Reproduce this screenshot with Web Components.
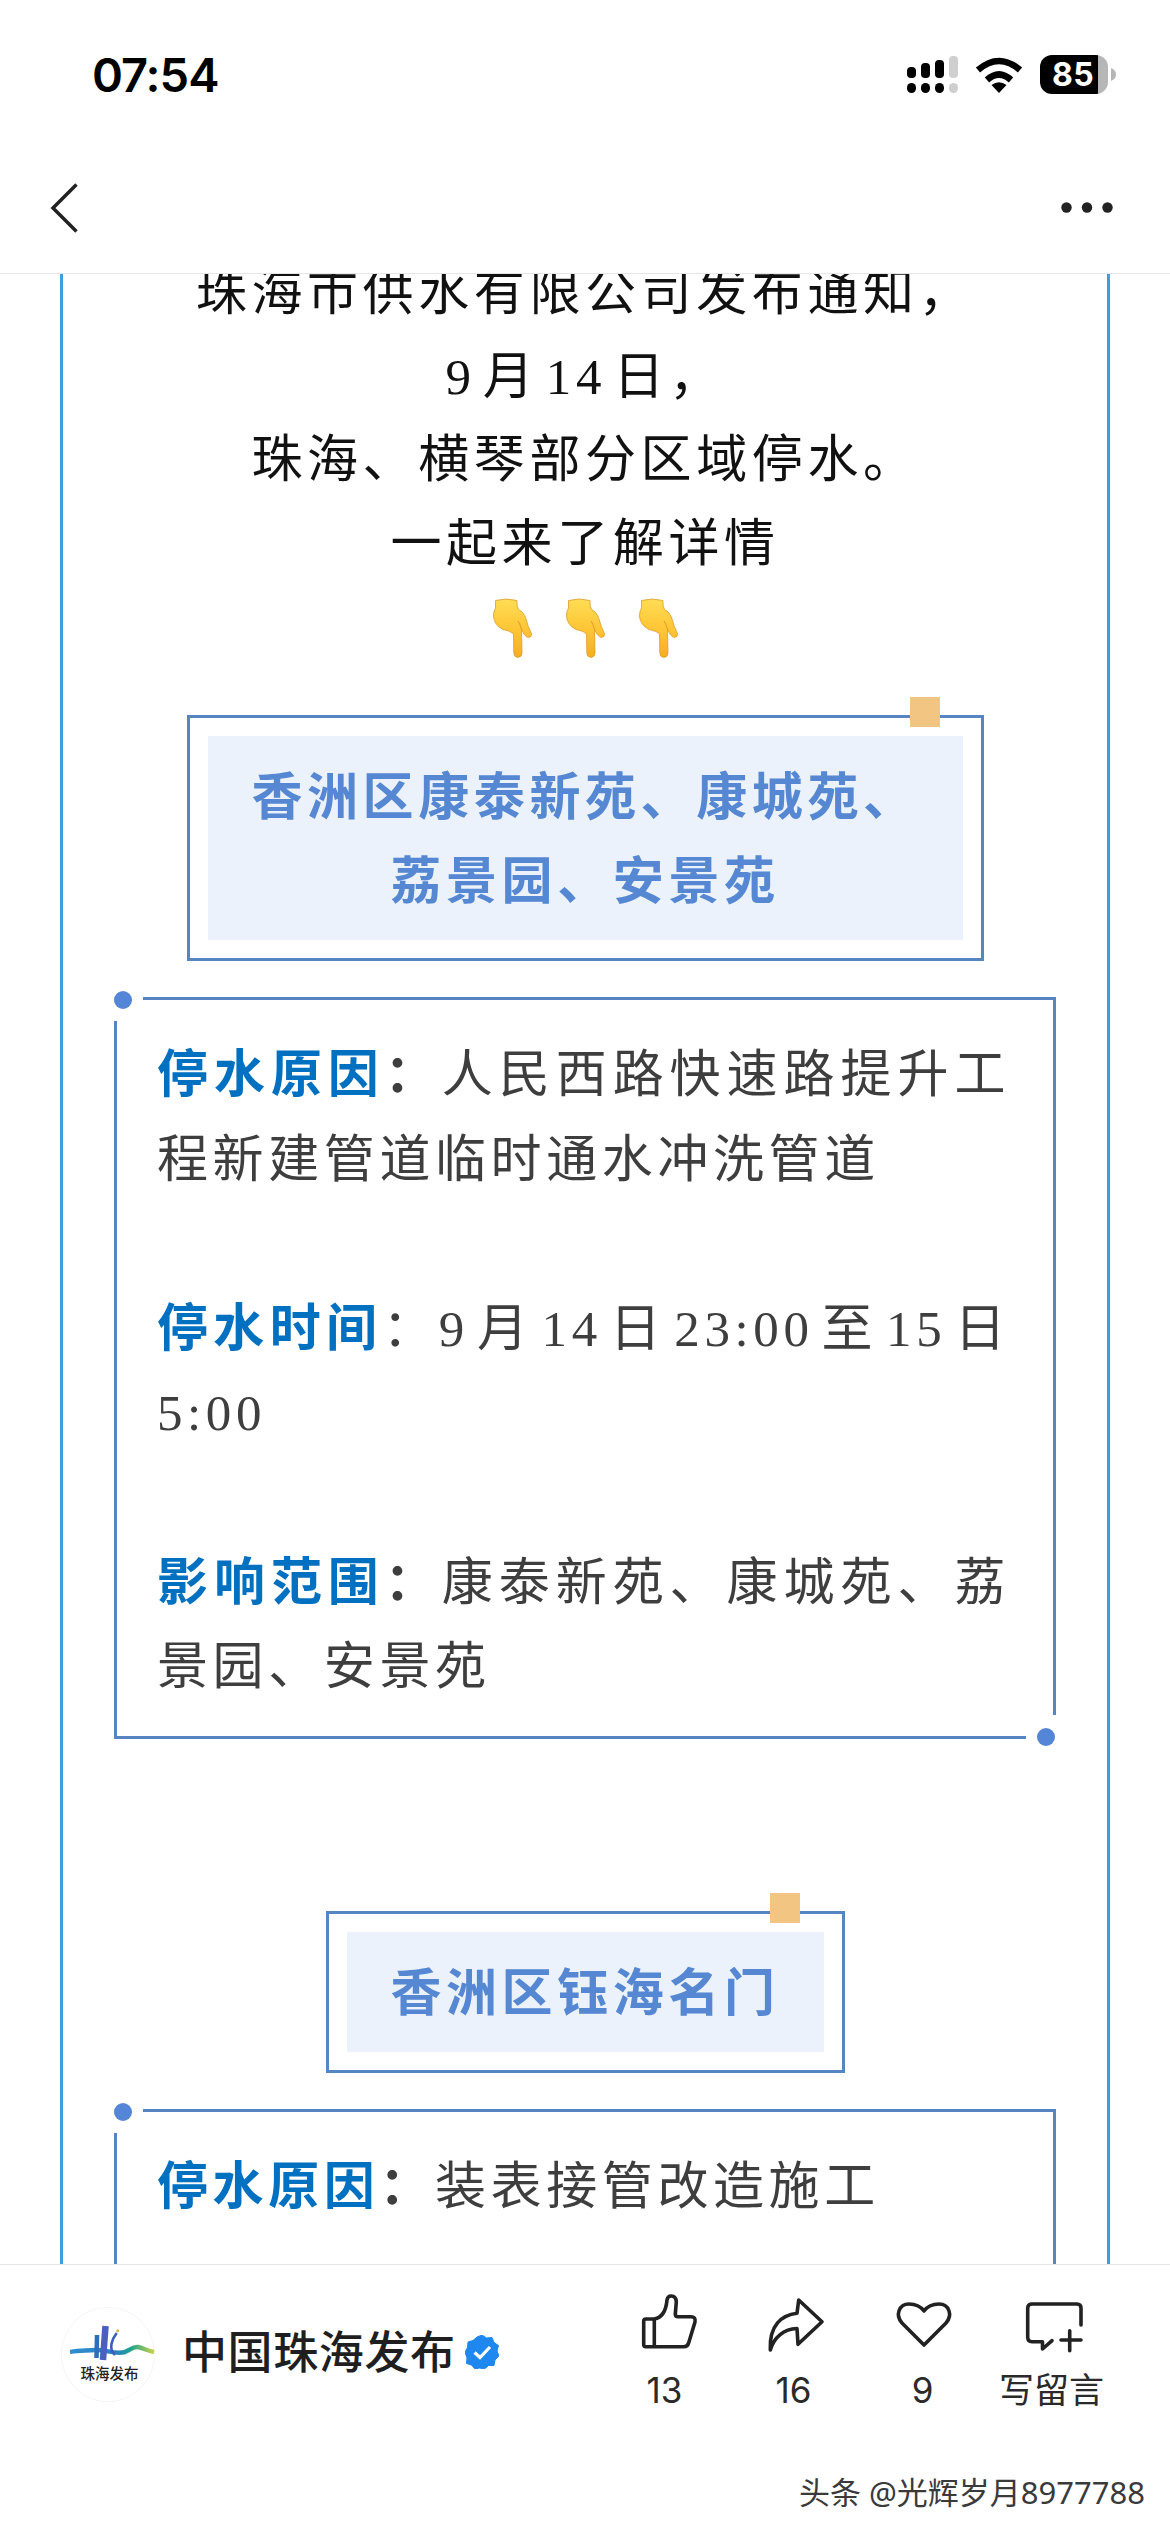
<!DOCTYPE html>
<html lang="zh-CN">
<head>
<meta charset="utf-8">
<title>珠海停水通知</title>
<style>
  html, body { margin: 0; padding: 0; background: #fff; }
  body { width: 1170px; height: 2532px; overflow: hidden; font-family: "Noto Sans CJK SC", sans-serif; }
</style>
</head>
<body>
<phone-page>
  <status-bar slot="top"></status-bar>
  <nav-bar slot="top"></nav-bar>
  <article-frame>
    <intro-text>
      <div>珠海市供水有限公司发布通知，</div>
      <div>9 月 14 日，</div>
      <div>珠海、横琴部分区域停水。</div>
      <div>一起来了解详情</div>
    </intro-text>
    <hand-row></hand-row>
    <area-title style="--w:797px;--tag:41px;margin-top:45px">香洲区康泰新苑、康城苑、荔景园、安景苑</area-title>
    <info-card style="margin-top:36px">
      <info-row label="停水原因" strong-colon>人民西路快速路提升工程新建管道临时通水冲洗管道</info-row>
      <info-row label="停水时间">9 月 14 日 23:00 至 15 日 5:00</info-row>
      <info-row label="影响范围" strong-colon>康泰新苑、康城苑、荔景园、安景苑</info-row>
    </info-card>
    <area-title style="--w:519px;--tag:42px;margin-top:172px">香洲区钰海名门</area-title>
    <info-card style="margin-top:36px;min-height:420px">
      <info-row label="停水原因" strong-colon>装表接管改造施工</info-row>
    </info-card>
  </article-frame>
  <page-footer slot="bottom"></page-footer>
</phone-page>

<script>
function make(tag, css, html) {
  customElements.define(tag, class extends HTMLElement {
    constructor() {
      super();
      this.attachShadow({ mode: 'open' }).innerHTML = '<style>' + css + '</style>' + (typeof html === 'function' ? html(this) : html);
    }
  });
}

make('phone-page', `
  :host { display: flex; flex-direction: column; width: 1170px; height: 2532px; background: #fff; overflow: hidden; }
  header { flex: none; height: 273px; border-bottom: 1px solid #e6e6e6; display: flex; flex-direction: column; background: #fff; position: relative; z-index: 1; }
  main { flex: 1; min-height: 0; overflow: hidden; }
  footer { flex: none; height: 268px; position: relative; z-index: 1; }
`, `<header><slot name="top"></slot></header><main><slot></slot></main><footer><slot name="bottom"></slot></footer>`);

make('status-bar', `
  :host { display: flex; align-items: center; height: 148px; padding: 0 54px 0 92px; box-sizing: border-box; color: #000; }
  .time { font: 600 47px/1 Inter, "Noto Sans", sans-serif; letter-spacing: -1px; flex: 1; }
  .icons { display: flex; align-items: center; }
  svg { display: block; flex: none; }
  .wifi { margin-left: 17px; }
  .batt { margin-left: 17px; width: 68px; height: 39px; border-radius: 12px; background: linear-gradient(90deg, #000 0, #000 58px, #b6b6b6 58px); box-sizing: border-box; padding-left: 12px; color: #fff; font: 700 32px/39px Inter, sans-serif; letter-spacing: .5px; }
  .nub { margin-left: 3px; }
`, `<span class="time">07:54</span>
  <span class="icons">
    <svg width="51" height="37" viewBox="0 0 51 37" aria-hidden="true">
      <g fill="#000">
        <rect x="0" y="11" width="9" height="11" rx="4"/><rect x="14" y="7" width="9" height="15" rx="4"/><rect x="28" y="4" width="9" height="18" rx="4"/>
        <rect x="0" y="27" width="9" height="10" rx="4.5"/><rect x="14" y="27" width="9" height="10" rx="4.5"/><rect x="28" y="27" width="9" height="10" rx="4.5"/>
      </g>
      <g fill="#cfcfcf"><rect x="42" y="0" width="9" height="22" rx="4"/><rect x="42" y="27" width="9" height="10" rx="4.5"/></g>
    </svg>
    <svg class="wifi" width="48" height="37" viewBox="0 0 48 37" aria-hidden="true">
      <path d="M3 14 Q24 -4 45 14" fill="none" stroke="#000" stroke-width="6.5"/>
      <path d="M12 24 Q24 13 36 24" fill="none" stroke="#000" stroke-width="6.5"/>
      <path d="M16.5 29 Q24 23.500 31.500 29 L24 37 Z" fill="#000"/>
    </svg>
    <span class="batt">85</span>
    <svg class="nub" width="5" height="13" viewBox="0 0 5 13" aria-hidden="true"><path d="M0 0 Q5 2 5 6.500 Q5 11 0 13 Z" fill="#b6b6b6"/></svg>
  </span>`);

make('nav-bar', `
  :host { display: flex; align-items: center; justify-content: space-between; flex: 1; padding: 0 57px 6px 50px; box-sizing: border-box; }
  svg { display: block; }
`, `<svg width="29" height="50" viewBox="0 0 29 50" aria-hidden="true"><path d="M26.500 1.500 L3 25 L26.500 48.500" fill="none" stroke="#222" stroke-width="3.500"/></svg>
  <svg width="52" height="11" viewBox="0 0 52 11" aria-hidden="true"><g fill="#222"><circle cx="5.500" cy="5.500" r="5.200"/><circle cx="26" cy="5.500" r="5.200"/><circle cx="46.500" cy="5.500" r="5.200"/></g></svg>`);

make('article-frame', `
  :host { display: block; margin: -22px 60px 0; border-left: 3px solid #3f9fdc; border-right: 3px solid #3f9fdc; min-height: 2100px; }
`, `<slot></slot>`);

make('intro-text', `
  :host { display: block; text-align: center; font: 400 51px/83.5px "Liberation Serif", "Noto Sans CJK SC", serif; letter-spacing: 4.6px; word-spacing: -10px; color: #111; }
`, `<slot></slot>`);

const handSvg = `<svg width="39" height="60" viewBox="0 0 39 60" aria-hidden="true">
  <defs><linearGradient id="h" x1="0" y1="0" x2="0" y2="1"><stop offset="0" stop-color="#ffdd55"/><stop offset=".55" stop-color="#fdc433"/><stop offset="1" stop-color="#f5ad24"/></linearGradient></defs>
  <path d="M2.500 2.500 Q13 -.5 24 2.500 Q23.500 8 25.500 11.500 Q31 14 33 21 Q35 29 38.500 35.500 Q39 39 35.500 39.500 Q31.500 39 28.500 31 L29 55 Q29 59 25 59.500 Q21 59 20.800 55 L20.500 36 Q18 33 10 31.500 Q1 27 .5 18 Q.5 13 2.500 10 Z" fill="url(#h)" stroke="#dd9a2c" stroke-width=".8"/>
  <path d="M28.500 31 Q27 26 25 23" fill="none" stroke="#e09a24" stroke-width="1"/>
</svg>`;
make('hand-row', `
  :host { display: flex; justify-content: center; align-items: center; gap: 34px; height: 84px; }
  svg { display: block; }
`, handSvg + handSvg + handSvg);

make('area-title', `
  :host { display: block; position: relative; box-sizing: border-box; width: var(--w); margin-left: auto; margin-right: auto; padding: 18px; border: 3px solid #5585c2; }
  .in { background: #ebf2fc; padding: 15px 40px 21px; text-align: center; font: 700 51px/84px "Noto Sans CJK SC", sans-serif; letter-spacing: 4.6px; color: #5587d2; }
  .tag { position: absolute; top: -21px; right: var(--tag); width: 30px; height: 30px; background: #f2c682; }
`, `<div class="in"><slot></slot></div><span class="tag"></span>`);

make('info-card', `
  :host { display: flex; flex-direction: column; gap: 84.6px; position: relative; box-sizing: border-box; margin-left: 51px; margin-right: 51px; padding: 33px 43px 26px 40px; border: 3px solid #5585c2; }
  .gap { position: absolute; background: #fff; }
  .tl { left: -3px; top: -3px; width: 29px; height: 24px; }
  .br { right: -3px; bottom: -3px; width: 30px; height: 24px; }
  .dot { position: absolute; width: 18px; height: 18px; border-radius: 50%; background: #5585d6; }
  .tl .dot { left: 0; top: -6px; }
  .br .dot { right: 1px; bottom: -7px; }
`, `<span class="gap tl"><span class="dot"></span></span><slot></slot><span class="gap br"><span class="dot"></span></span>`);

make('info-row', `
  :host { display: block; text-align: justify; font: 400 51px/84.6px "Liberation Serif", "Noto Sans CJK SC", serif; letter-spacing: 4.6px; word-spacing: -10px; color: #3e3e3e; }
  b { font-weight: 700; color: #0070c0; }
`, (el) => `<b>${el.getAttribute('label')}</b>${el.hasAttribute('strong-colon') ? '<b style="color:#3e3e3e">：</b>' : '：'}<slot></slot>`);

make('action-item', `
  :host { display: flex; flex-direction: column; align-items: center; width: 129px; color: #2a2a2a; }
  .ic { width: 60px; height: 60px; }
  svg { display: block; overflow: visible; }
  span { margin-top: 15px; font: 400 35px/44px Inter, "Noto Sans CJK SC", sans-serif; white-space: nowrap; }
`, (el) => `<div class="ic"><svg width="60" height="60" viewBox="0 0 60 60" fill="none" stroke="#222" stroke-width="3.600" stroke-linejoin="round" stroke-linecap="round" aria-hidden="true"><path d="${el.getAttribute('d')}"/></svg></div><span><slot></slot></span>`);

make('page-footer', `
  :host { display: block; position: relative; height: 268px; box-sizing: border-box; border-top: 1px solid #e6e6e6; background: #fff; }
  .row { display: flex; align-items: flex-start; padding: 28px 54px 0 61px; }
  .who { display: flex; align-items: center; margin-top: 14px; }
  .logo { width: 94px; height: 95px; border-radius: 50%; border: 1px solid #f6f6f6; box-sizing: border-box; display: flex; flex-direction: column; align-items: center; position: relative; }
  .logo svg { display: block; margin: 17px 0 0 10px; flex: none; }
  .logo span { font: 500 14.500px/16px "Noto Sans CJK SC", sans-serif; color: #222; margin-top: 4px; margin-left: 3px; white-space: nowrap; }
  .name { margin-left: 27px; font: 500 45px/60px "Noto Sans CJK SC", sans-serif; letter-spacing: .6px; color: #1f1f1f; margin-top: -9px; white-space: nowrap; }
  .badge { margin-left: 9px; margin-top: -6px; display: block; }
  .acts { display: flex; margin-left: auto; }
  .wm { position: absolute; right: 25px; top: 209px; font: 400 31px/36px "Noto Sans", "Noto Sans CJK SC", sans-serif; color: #3a3a3a; text-shadow: 1.5px 1px 0 #fff; white-space: nowrap; }
`, `<div class="row">
    <div class="who">
      <div class="logo">
        <svg width="86" height="36" viewBox="0 0 86 36" fill="none" aria-hidden="true">
          <defs><linearGradient id="rib" x1="0" y1="0" x2="1" y2="0"><stop offset="0" stop-color="#2f8fd0"/><stop offset=".55" stop-color="#2a7fc4"/><stop offset=".72" stop-color="#20a38e"/><stop offset="1" stop-color="#c9d24a"/></linearGradient></defs>
          <path d="M0 27 C10 25 18 26 25 25 C35 24 45 30 55 27 C60 25 63 21.500 68 22 C73 23 78 26 84 27" stroke="url(#rib)" stroke-width="4.500"/>
          <path d="M27 10 L26.500 33" stroke="#2b6fbc" stroke-width="4.500"/>
          <path d="M35.500 1 L33 35" stroke="#4a5fbe" stroke-width="6.500"/>
          <path d="M46.700 8 C42 14 38 24 45 30" stroke="#3a5fb6" stroke-width="2.600"/>
          <circle cx="47.700" cy="5.700" r="1.500" fill="#d2b24a"/>
        </svg>
        <span>珠海发布</span>
      </div>
      <span class="name">中国珠海发布</span>
      <svg class="badge" width="34" height="34" viewBox="0 0 34 34" aria-hidden="true">
        <path d="M17 0 L21.500 3 L27 2.500 L29 7.500 L33.500 10.500 L32 16 L34 21 L30 25 L29 30.500 L23.500 30.500 L19.500 34 L14.500 33 L10 34 L6.500 30 L1.500 28.500 L2 23 L0 17 L2.500 12.500 L3 7 L8 5.500 L12 2 Z" fill="#1e87f0" stroke="#1e87f0" stroke-linejoin="round" stroke-width="1"/>
        <path d="M9.500 17.500 L15 22.500 L25 12" fill="none" stroke="#fff" stroke-width="3.200"/>
      </svg>
    </div>
    <div class="acts">
      <action-item d="M19.300 26 H11 Q8.700 26 8.700 28.300 V51.400 Q8.700 53.700 11 53.700 H48.700 Q52.700 53.700 53.700 49.700 L60 29 Q61 23.700 56 23.700 H43 Q40.300 23.700 40.300 21 L41.300 9 Q41 3 36.300 3 Q32.500 3 32 7 Q30.500 24 19.300 26 Z M19.300 26 V53.700">13</action-item>
      <action-item d="M34.700 7 L58 28.700 L34 51.300 L33 35.500 C20 36 10 44 6.300 57 C5 32 18 22 33 20.300 Z">16</action-item>
      <action-item d="M31 52 L9 30 C2 22 6 11 16 11 C23 11 28 14 31 18 C34 14 39 11 46 11 C56 11 60 22 53 30 Z">9</action-item>
      <action-item d="M59 32 V15 Q59 11 55 11 H10 Q5.700 11 5.700 15 V44 Q5.700 48.700 10 48.700 H20.500 V56 L30 47.700 M39 47 H59 M47.700 37.700 V57.700">写留言</action-item>
    </div>
  </div>
  <div class="wm">头条 @光辉岁月8977788</div>`);
</script>
</body>
</html>
